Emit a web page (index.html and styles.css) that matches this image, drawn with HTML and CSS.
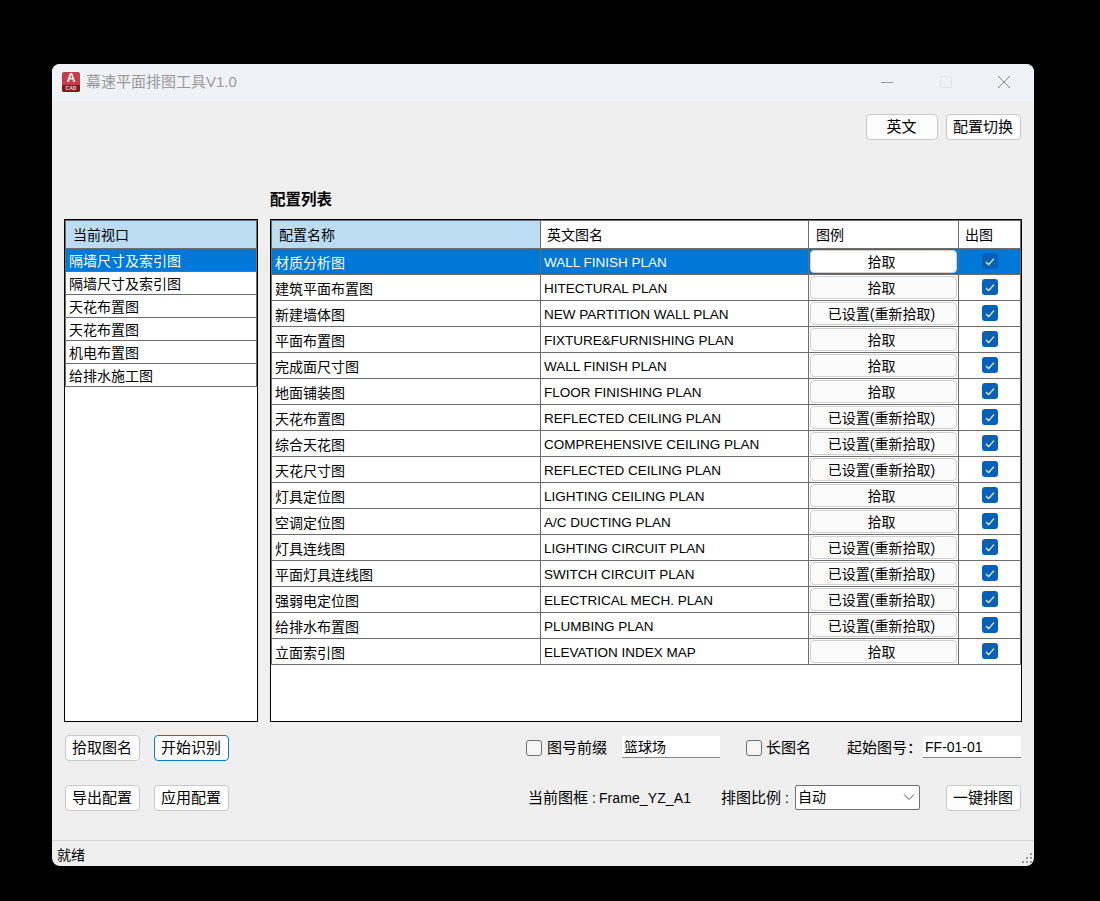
FILE: index.html
```html
<!DOCTYPE html>
<html lang="zh-CN">

<head>
    <meta charset="UTF-8">
    <meta name="viewport" content="width=device-width, initial-scale=1.0">
    <title>幕速平面排图工具V1.0</title>
    <link rel="stylesheet" href="styles.css">
</head>

<body>
    <div class="window">
        <div class="titlebar">
            <div class="app-logo"><span class="logo-a">A</span><span class="logo-cad">CAD</span></div>
            <div class="app-title">幕速平面排图工具V1.0</div>
            <div class="win-controls">
                <svg class="win-btn" width="14" height="14" viewBox="0 0 14 14"><path d="M1 7.5h12" stroke="#9a9a9a" fill="none"/></svg>
                <svg class="win-btn" width="14" height="14" viewBox="0 0 14 14"><rect x="1.5" y="1.5" width="11" height="11" rx="2" stroke="#dcdfe3" fill="none"/></svg>
                <svg class="win-btn" width="14" height="14" viewBox="0 0 14 14"><path d="M1 1l12 12M13 1L1 13" stroke="#8a8a8a" fill="none"/></svg>
            </div>
        </div>

        <div class="content">
            <div class="top-actions">
                <button class="btn short">英文</button>
                <button class="btn">配置切换</button>
            </div>

            <div class="section-label">配置列表</div>

            <div class="panels">
                <div class="panel">
                    <div class="list-head">当前视口</div>
                    <div class="list-row selected">隔墙尺寸及索引图</div>
                    <div class="list-row">隔墙尺寸及索引图</div>
                    <div class="list-row">天花布置图</div>
                    <div class="list-row">天花布置图</div>
                    <div class="list-row">机电布置图</div>
                    <div class="list-row">给排水施工图</div>
                </div>

                <div class="panel">
                    <table class="config-table">
                        <colgroup>
                            <col class="col-name">
                            <col class="col-en">
                            <col class="col-legend">
                            <col class="col-out">
                        </colgroup>
                        <thead>
                            <tr>
                                <th class="active">配置名称</th>
                                <th>英文图名</th>
                                <th class="legend-head">图例</th>
                                <th>出图</th>
                            </tr>
                        </thead>
                        <tbody id="rows"></tbody>
                    </table>
                </div>
            </div>

            <div class="bottom-row first">
                <div class="left-btns">
                    <button class="btn">拾取图名</button>
                    <button class="btn focused">开始识别</button>
                </div>
                <div class="opts">
                    <label class="opt prefix"><span class="box"></span><span class="opt-text">图号前缀</span></label>
                    <div class="field prefix-input">篮球场</div>
                    <label class="opt long-name"><span class="box"></span><span class="opt-text">长图名</span></label>
                    <span class="start-label">起始图号：</span>
                    <div class="field start-input">FF-01-01</div>
                </div>
            </div>

            <div class="bottom-row second">
                <div class="left-btns">
                    <button class="btn">导出配置</button>
                    <button class="btn">应用配置</button>
                </div>
                <div class="opts">
                    <span class="frame-label">当前图框<span class="colon">:</span><span class="frame-name">Frame_YZ_A1</span></span>
                    <span class="scale-label">排图比例<span class="colon">:</span></span>
                    <div class="combo">自动
                        <svg class="combo-arrow" width="12" height="8" viewBox="0 0 12 8"><path d="M1 1.5l5 5 5-5" stroke="#555" fill="none"/></svg>
                    </div>
                    <button class="btn">一键排图</button>
                </div>
            </div>
        </div>

        <div class="statusbar">
            <span>就绪</span>
            <div class="grip"><i></i><i></i><i></i><i></i><i></i><i></i></div>
        </div>
    </div>

    <script>
        const configs = [
            ["材质分析图", "WALL FINISH PLAN", false],
            ["建筑平面布置图", "HITECTURAL PLAN", false],
            ["新建墙体图", "NEW PARTITION WALL PLAN", true],
            ["平面布置图", "FIXTURE&FURNISHING PLAN", false],
            ["完成面尺寸图", "WALL FINISH PLAN", false],
            ["地面铺装图", "FLOOR FINISHING PLAN", false],
            ["天花布置图", "REFLECTED CEILING PLAN", true],
            ["综合天花图", "COMPREHENSIVE CEILING PLAN", true],
            ["天花尺寸图", "REFLECTED CEILING PLAN", true],
            ["灯具定位图", "LIGHTING CEILING PLAN", false],
            ["空调定位图", "A/C DUCTING PLAN", false],
            ["灯具连线图", "LIGHTING CIRCUIT PLAN", true],
            ["平面灯具连线图", "SWITCH CIRCUIT PLAN", true],
            ["强弱电定位图", "ELECTRICAL MECH. PLAN", true],
            ["给排水布置图", "PLUMBING PLAN", true],
            ["立面索引图", "ELEVATION INDEX MAP", false]
        ];

        const tbody = document.getElementById("rows");
        configs.forEach((c, i) => {
            const tr = document.createElement("tr");
            if (i === 0) tr.className = "selected";
            tr.innerHTML =
                '<td class="name"></td><td class="en"></td>' +
                '<td class="legend"><button class="pick">' + (c[2] ? "已设置(重新拾取)" : "拾取") + '</button></td>' +
                '<td class="out"><span class="check"><svg width="10" height="9" viewBox="0 0 10 9"><path d="M1 5l2.6 2.6L9 1.6" stroke="#fff" stroke-width="1.2" fill="none"/></svg></span></td>';
            tr.children[0].textContent = c[0];
            tr.children[1].textContent = c[1];
            tbody.appendChild(tr);
        });
    </script>
</body>

</html>
```

FILE: styles.css
```css
* {
    box-sizing: border-box;
}

html,
body {
    height: 100%;
}

body {
    margin: 0;
    background-color: #000;
    font-family: "Liberation Sans", "Noto Sans CJK SC", sans-serif;
    font-size: 14px;
    color: #000;
    overflow: hidden;
}

.window {
    width: 982px;
    height: 802px;
    margin: 64px 0 0 52px;
    background-color: #efefef;
    border-radius: 8px;
    display: flex;
    flex-direction: column;
    overflow: hidden;
}

/* title bar */
.titlebar {
    height: 37px;
    flex: none;
    background-color: #eff2f6;
    display: flex;
    align-items: center;
    padding: 0 0 2px 10px;
}

.app-logo {
    width: 18px;
    height: 20px;
    border-radius: 2px;
    background-color: #c0404a;
    display: flex;
    flex-direction: column;
    align-items: center;
    overflow: hidden;
}

.logo-a {
    height: 13px;
    line-height: 13px;
    font-size: 12px;
    font-weight: bold;
    color: #fff;
}

.logo-cad {
    width: 100%;
    height: 7px;
    line-height: 7px;
    font-size: 5px;
    font-weight: bold;
    text-align: center;
    color: #f3d9d9;
    background-color: #8a1420;
}

.app-title {
    margin: 0 0 2px 6px;
    font-size: 15px;
    color: #9a9a9a;
}

.win-controls {
    margin-left: auto;
    display: flex;
    gap: 44.5px;
    padding-right: 23px;
}

/* main area */
.content {
    flex: 1;
    padding: 13px 12px 0;
}

.top-actions {
    display: flex;
    justify-content: flex-end;
    gap: 8px;
    padding-right: 1px;
}

.btn {
    width: 75px;
    height: 26px;
    padding: 0 1px 4px 0;
    background-color: #fdfdfd;
    border: 1px solid #c9c9c9;
    border-radius: 4px;
    font-family: inherit;
    font-size: 15px;
    color: #000;
}

.btn.short {
    width: 72px;
}

.btn.focused {
    border-color: #0a78d4;
}

.section-label {
    margin: 50px 0 0 206px;
    height: 20px;
    line-height: 20px;
    font-size: 15.5px;
    font-weight: bold;
}

.panels {
    margin-top: 9px;
    display: grid;
    grid-template-columns: 194px 752px;
    gap: 12px;
    height: 503px;
}

.panel {
    background-color: #fff;
    border: 1px solid #000;
    overflow: hidden;
}

.list-head {
    height: 29px;
    line-height: 29px;
    padding: 0 7px;
    background-color: #bcdcf3;
    border: 1px solid #6d6d6d;
}

.list-row {
    height: 23px;
    line-height: 24px;
    padding-left: 3px;
    border: 1px solid #6d6d6d;
    border-width: 0 1px 1px 1px;
}

.list-row.selected {
    background-color: #0078d7;
    color: #fff;
}

/* config table */
.config-table {
    width: 750px;
    table-layout: fixed;
    border-collapse: separate;
    border-spacing: 0;
}

.col-name {
    width: 270px;
}

.col-en {
    width: 268px;
}

.col-legend {
    width: 150px;
}

.col-out {
    width: 62px;
}

.config-table th {
    height: 29px;
    padding: 0 6px 2px;
    font-weight: normal;
    text-align: left;
    border-top: 1px solid #6d6d6d;
    border-right: 1px solid #6d6d6d;
    border-bottom: 1px solid #6d6d6d;
}

.config-table th.active {
    padding-left: 7px;
    background-color: #bcdcf3;
    border-left: 1px solid #6d6d6d;
}

.config-table th.legend-head {
    padding-left: 7px;
}

.config-table td {
    height: 26px;
    padding: 0 3px;
    border-right: 1px solid #6d6d6d;
    border-bottom: 1px solid #6d6d6d;
    white-space: nowrap;
}

.config-table td.name {
    border-left: 1px solid #6d6d6d;
}

.config-table td.en {
    padding-top: 2px;
    font-size: 13.5px;
}

.config-table tr.selected td {
    background-color: #0078d7;
    color: #fff;
}

.config-table td.legend {
    padding: 1px 0 0 1px;
    vertical-align: top;
}

.pick {
    display: block;
    width: 147px;
    height: 23px;
    padding: 0 4px 2px 0;
    background-color: #fbfbfb;
    border: 1px solid #d0d0d0;
    border-radius: 4px;
    font-family: inherit;
    font-size: 14px;
    color: #000;
}

.selected .pick {
    background-color: #fff;
}

.config-table td.out {
    padding: 4px 0 0;
    vertical-align: top;
}

.check {
    display: flex;
    align-items: center;
    justify-content: center;
    width: 16px;
    height: 16px;
    margin: 0 auto;
    border-radius: 3px;
    background-color: #0560b8;
}

/* bottom rows */
.bottom-row {
    display: flex;
    align-items: center;
    height: 26px;
    padding: 0 1px;
}

.bottom-row.first {
    margin-top: 13px;
}

.bottom-row.second {
    margin-top: 24px;
}

.left-btns {
    display: flex;
    gap: 14px;
}

.opts {
    flex: 1;
    display: flex;
    align-items: center;
    font-size: 15px;
}

.opt {
    display: flex;
    align-items: center;
    gap: 5px;
}

.opt-text {
    margin-bottom: 3px;
}

.box {
    width: 16px;
    height: 16px;
    border: 1px solid #707070;
    border-radius: 3px;
    background-color: #f6f6f6;
}

.opt.prefix {
    margin-left: 297px;
}

.field {
    height: 22px;
    line-height: 22px;
    margin-bottom: 2px;
    padding-left: 2px;
    font-size: 14px;
    background-color: #fff;
    border-bottom: 1px solid #868686;
}

.prefix-input {
    width: 98px;
    margin-left: 15px;
}

.opt.long-name {
    margin-left: 26px;
    gap: 4px;
}

.start-label {
    margin: 0 0 3px 36px;
    width: 76px;
}

.start-input {
    width: 98px;
}

.frame-label {
    margin: 0 0 3px 299px;
    width: 193px;
    white-space: nowrap;
}

.colon {
    margin: 0 3px 0 4px;
    font-size: 14px;
}

.frame-name {
    font-size: 14px;
    letter-spacing: 0.1px;
}

.scale-label {
    width: 74px;
    margin-bottom: 3px;
    white-space: nowrap;
}

.combo {
    position: relative;
    align-self: flex-start;
    width: 125px;
    height: 25px;
    line-height: 23px;
    padding-left: 2px;
    margin-right: 26px;
    font-size: 14px;
    background-color: #fff;
    border: 1px solid #707070;
    border-radius: 2px;
}

.combo-arrow {
    position: absolute;
    right: 4px;
    top: 7px;
}

/* status bar */
.statusbar {
    position: relative;
    height: 26px;
    flex: none;
    line-height: 28px;
    padding-left: 5px;
    border-top: 1px solid #d4d4d4;
}

.grip {
    position: absolute;
    right: 2px;
    bottom: 3px;
    display: grid;
    grid-template-columns: repeat(3, 2px);
    grid-template-rows: repeat(3, 2px);
    gap: 2px;
}

.grip i {
    background-color: #9a9a9a;
}

.grip i:nth-child(1) {
    grid-area: 1 / 3;
}

.grip i:nth-child(2) {
    grid-area: 2 / 3;
}

.grip i:nth-child(3) {
    grid-area: 2 / 2;
}

.grip i:nth-child(4) {
    grid-area: 3 / 3;
}

.grip i:nth-child(5) {
    grid-area: 3 / 2;
}

.grip i:nth-child(6) {
    grid-area: 3 / 1;
}
```
